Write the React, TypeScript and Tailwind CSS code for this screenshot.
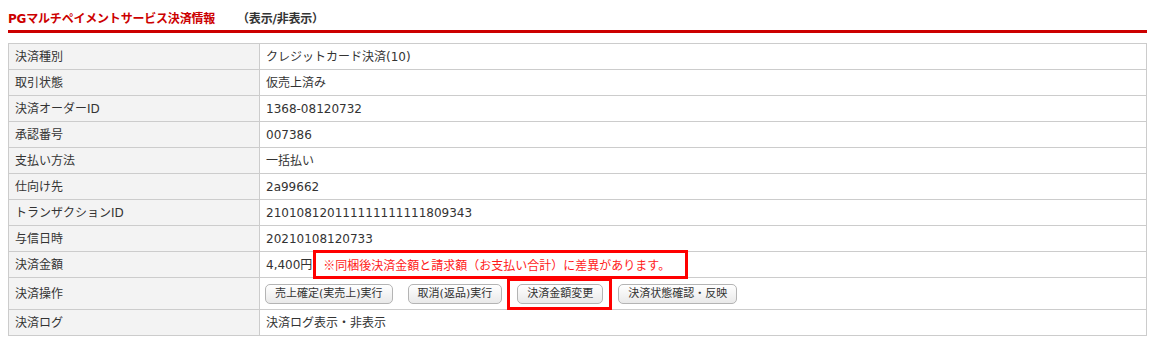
import React from "react";

type Row = { label: string; value?: React.ReactNode };

// 英数字は幅の広い DejaVu、和文は Noto Sans CJK JP
const font = { fontFamily: '"DejaVu Sans", "Noto Sans CJK JP", sans-serif' };
const cjk = { fontFamily: '"Noto Sans CJK JP", sans-serif' };

function Btn({ children }: { children: React.ReactNode }) {
  return (
    <button className="h-[20px] px-[9px] rounded-[5px] border border-[#b4b4b4] bg-gradient-to-b from-white to-[#e9e9e9] text-[11px] leading-[18px] text-[#333]">
      {children}
    </button>
  );
}

export default function App() {
  const rows: Row[] = [
    { label: "決済種別", value: "クレジットカード決済(10)" },
    { label: "取引状態", value: "仮売上済み" },
    { label: "決済オーダーID", value: "1368-08120732" },
    { label: "承認番号", value: "007386" },
    { label: "支払い方法", value: "一括払い" },
    { label: "仕向け先", value: "2a99662" },
    { label: "トランザクションID", value: "210108120111111111111809343" },
    { label: "与信日時", value: "20210108120733" },
    {
      label: "決済金額",
      value: (
        <div className="flex items-center">
          <span>4,400円</span>
          <span className="relative ml-[11px] leading-[16px] text-[#ff1a1a]" style={cjk}>
            ※同梱後決済金額と請求額（お支払い合計）に差異があります。
            {/* 注記の赤枠 */}
            <span className="absolute left-[-10px] top-[-7px] w-[375px] h-[29px] border-[3px] border-[#ff0000]" />
          </span>
        </div>
      ),
    },
    {
      label: "決済操作",
      value: (
        <div className="flex items-center gap-[15px] -ml-[1px]">
          <Btn>売上確定(実売上)実行</Btn>
          <Btn>取消(返品)実行</Btn>
          <span className="relative flex">
            <Btn>決済金額変更</Btn>
            <span className="absolute left-[-10px] right-[-9px] top-[-6px] bottom-[-6px] border-[3px] border-[#ff0000]" />
          </span>
          <Btn>決済状態確認・反映</Btn>
        </div>
      ),
    },
    { label: "決済ログ", value: "決済ログ表示・非表示" },
  ];

  return (
    <div className="bg-white min-h-[341px] px-2 pt-[7px] text-[12px] text-[#333]" style={font}>
      <div className="h-[23px] flex items-center font-bold text-[12px] tracking-[-0.2px]">
        <span className="text-[#cc0000]">PGマルチペイメントサービス決済情報</span>
        <span className="ml-[22px] text-[#333]">（表示/非表示）</span>
      </div>
      <div className="h-[3px] bg-[#cc0000]" />

      <table className="mt-[10px] w-full border-collapse">
        <tbody>
          {rows.map((r) => (
            <tr key={r.label} className={r.label === "決済操作" ? "h-[32px]" : "h-[26px]"}>
              <td className="w-[251px] border border-[#cccccc] bg-[#f3f3f3] pl-[6px] py-0 leading-[16px]">
                {r.label}
              </td>
              <td className="border border-[#cccccc] bg-white pl-[6px] py-0 leading-[16px]">
                {r.value}
              </td>
            </tr>
          ))}
        </tbody>
      </table>
    </div>
  );
}
